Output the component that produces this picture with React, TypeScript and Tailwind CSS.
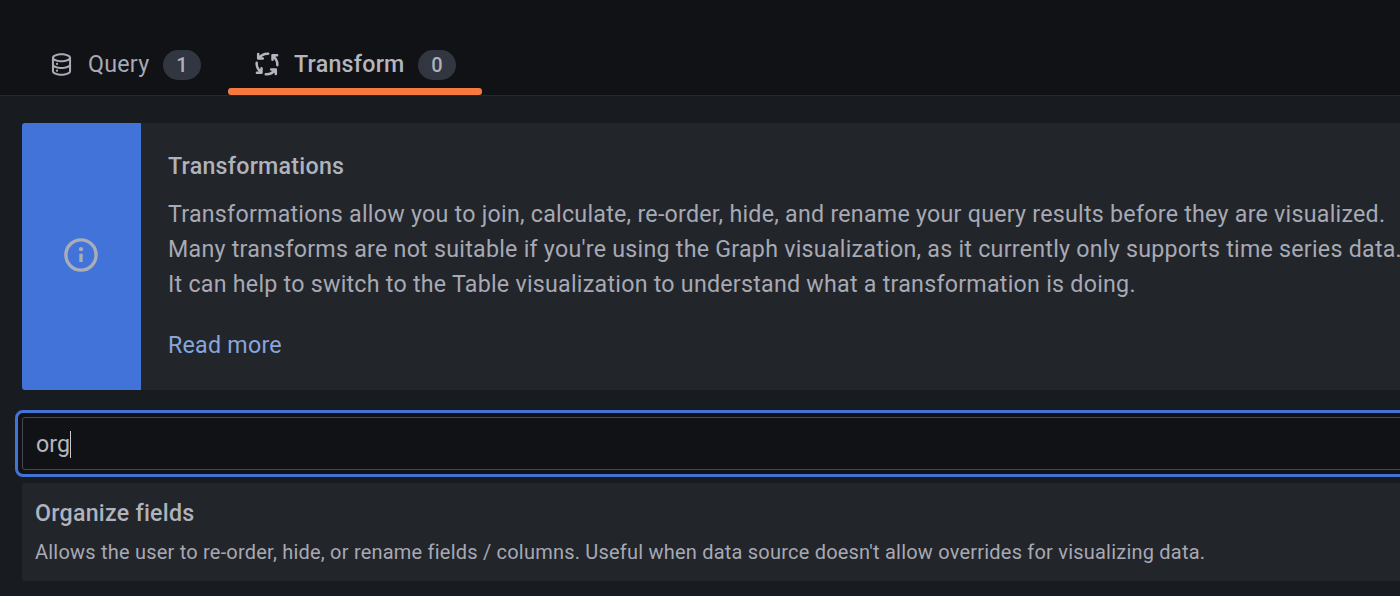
import type { ReactNode } from 'react';

function DatabaseIcon() {
  return (
    <svg width="27" height="27" viewBox="0 0 24 24" fill="#a9abb6">
      <path d="M8 16.5a1 1 0 1 0 1 1 1 1 0 0 0-1-1ZM12 2C8 2 3.5 3.37 3.5 6V18c0 2.63 4.5 4 8.5 4s8.5-1.37 8.500-4V6C20.500 3.370 16 2 12 2Zm6.700 16c0 .71-2.980 2.200-6.700 2.200s-6.700-1.490-6.700-2.200V14.730A13.160 13.160 0 0 0 12 16a13.160 13.160 0 0 0 6.700-1.270Zm0-6c0 .71-2.980 2.200-6.700 2.200s-6.700-1.490-6.700-2.200V8.730A13.160 13.160 0 0 0 12 10a13.160 13.160 0 0 0 6.700-1.270ZM12 8.200C8.280 8.200 5.300 6.710 5.300 6s2.980-2.200 6.700-2.200 6.700 1.490 6.700 2.200S15.720 8.200 12 8.200ZM8 10.500a1 1 0 1 0 1 1 1 1 0 0 0-1-1Z" />
    </svg>
  );
}

function ProcessIcon() {
  return (
    <svg width="24" height="24" viewBox="0 0 24 24" fill="none" stroke="#b4b6bf" strokeWidth="2.5" strokeLinecap="round" strokeLinejoin="round">
      <path d="M13.2 1.7C9.6 1.4 6.2 3.2 3.9 6.1M3.2 1.9V6.5H7.8" />
      <path d="M22.3 13.2C22.6 9.6 20.8 6.2 17.9 3.9M22.1 3.2H17.5V7.8" />
      <path d="M10.8 22.3C14.4 22.6 17.8 20.8 20.1 17.9M20.8 22.1V17.5H16.2" />
      <path d="M1.7 10.8C1.4 14.4 3.2 17.8 6.1 20.1M1.9 20.8H6.5V16.2" />
    </svg>
  );
}

function InfoIcon() {
  return (
    <svg className="mr-0.5 mb-1" width="34" height="34" viewBox="0 0 34 34" fill="none" stroke="#a9adb8" strokeWidth="3.4">
      <circle cx="17" cy="17" r="15.1" />
      <path d="M17 15.8V24" />
      <circle cx="17" cy="11.2" r="2.1" fill="#a9adb8" stroke="none" />
    </svg>
  );
}

function Count({ children }: { children: ReactNode }) {
  return (
    <span className="mt-0.5 flex h-[30px] w-[38px] items-center justify-center rounded-full bg-[#323641] text-[20px] font-medium text-[#aeb0b9]">
      {children}
    </span>
  );
}

export default function App() {
  return (
    <div className="flex h-[596px] w-full flex-col overflow-hidden bg-[#181b1f] font-[Roboto,sans-serif] whitespace-nowrap text-[#a7a9b4]">
      <nav className="flex h-24 shrink-0 items-end border-b border-[#25282c] bg-[#111216] pl-6">
        <button className="flex h-[62px] w-[204px] items-center pl-6 text-[23.23px]">
          <DatabaseIcon />
          <span className="ml-[13px] w-[75px] text-left tracking-[0.25px]">Query</span>
          <Count>1</Count>
        </button>
        <div className="flex h-[62px] w-[254px] flex-col">
          <button className="flex h-[62px] shrink-0 items-center pl-[27px] text-[23.23px] font-medium text-[#b4b6bf]">
            <ProcessIcon />
            <span className="ml-[15px] w-[124px] text-left tracking-[0.25px]">Transform</span>
            <Count>0</Count>
          </button>
          <div className="-mt-[7px] h-[6.5px] shrink-0 rounded-[3px] bg-[#f67a40]" />
        </div>
      </nav>

      <main className="flex w-[1440px] flex-col pl-[22px]">
        <section className="mt-[27px] flex h-[267px] overflow-hidden rounded-[3px] bg-[#22252a]">
          <div className="flex w-[119px] shrink-0 items-center justify-center bg-[#4173d9]">
            <InfoIcon />
          </div>
          <div className="pt-[26px] pl-[27px] text-[23.23px] leading-[35px] tracking-[0.25px]">
            <h2 className="font-medium text-[#b0b2bc]">Transformations</h2>
            <p className="mt-[13px]">
              Transformations allow you to join, calculate, re-order, hide, and rename your query results before they are visualized.
              <br />
              Many transforms are not suitable if you're using the Graph visualization, as it currently only supports time series data.
              <br />
              It can help to switch to the Table visualization to understand what a transformation is doing.
            </p>
            <a className="mt-[26px] block text-[#88a5de]">Read more</a>
          </div>
        </section>

        <div className="mt-5 -ml-[7px] flex h-[67px] rounded-[8px] border-[3px] border-[#4173d9] bg-[#111216] p-1">
          <div className="flex grow items-center rounded-[3px] border border-[#454851] pt-px pl-[13px] text-[23.23px] text-[#b4b6bf]">
            <span>org</span>
            <span className="h-[27px] w-px bg-[#c8cad2]" />
          </div>
        </div>

        <section className="mt-[6px] h-[98px] rounded-[3px] bg-[#22252a] pt-[14px] pl-[13px]">
          <h3 className="text-[23.23px] leading-[32px] font-medium tracking-[0.25px] text-[#b0b2bc]">Organize fields</h3>
          <p className="mt-[9px] text-[20px] leading-[28px] tracking-[0.21px]">
            Allows the user to re-order, hide, or rename fields / columns. Useful when data source doesn't allow overrides for visualizing data.
          </p>
        </section>
      </main>
    </div>
  );
}
